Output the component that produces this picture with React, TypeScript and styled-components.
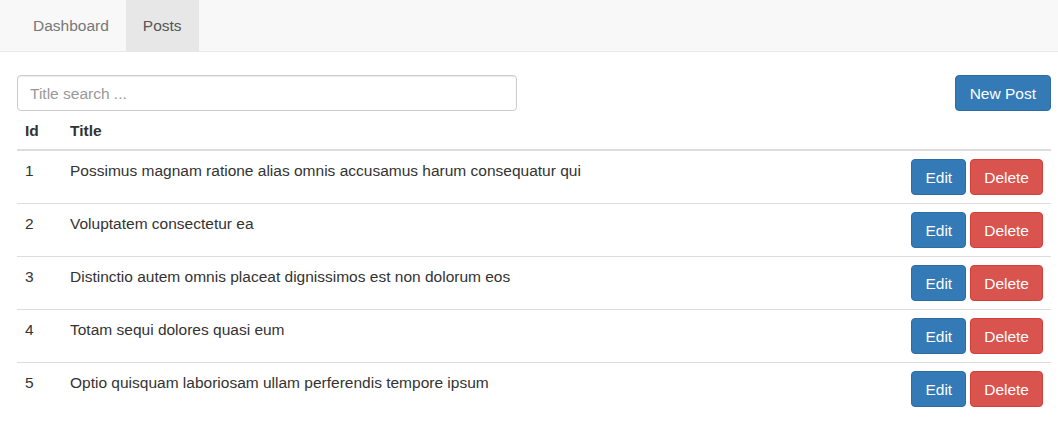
import React from 'react';
import styled, { createGlobalStyle } from 'styled-components';

const GlobalStyle = createGlobalStyle`
  * {
    box-sizing: border-box;
  }
  body {
    margin: 0;
    background: #fff;
    color: #333;
    font-family: "Liberation Sans", Helvetica, Arial, sans-serif;
    font-size: 15.5px;
    line-height: 22px;
  }
`;

const StyledNavbar = styled.nav`
  display: flex;
  height: 52px;
  padding-left: 16px;
  background-color: #f8f8f8;
  border-bottom: 1px solid #e7e7e7;
`;

const StyledNavLink = styled.a<{ $active?: boolean }>`
  display: block;
  height: 51px;
  padding: 15px 17px 14px;
  color: ${(p) => (p.$active ? '#555' : '#777')};
  background-color: ${(p) => (p.$active ? '#e7e7e7' : 'transparent')};
  text-decoration: none;
`;

const StyledMain = styled.main`
  padding: 23px 7px 0 17px;
`;

const StyledToolbar = styled.div`
  display: flex;
  justify-content: space-between;
  align-items: flex-start;
`;

const StyledSearch = styled.input`
  width: 500px;
  height: 36px;
  padding: 1px 12px 0;
  font: inherit;
  color: #555;
  border: 1px solid #ccc;
  border-radius: 4px;
  box-shadow: inset 0 1px 1px rgba(0, 0, 0, 0.075);
  outline: none;
  &::placeholder {
    color: #999;
  }
`;

const StyledButton = styled.button<{ $variant: 'primary' | 'danger' }>`
  height: 36px;
  padding: 1px 13px 0;
  font: inherit;
  color: #fff;
  border-radius: 4px;
  cursor: pointer;
  background-color: ${(p) => (p.$variant === 'primary' ? '#337ab7' : '#d9534f')};
  border: 1px solid ${(p) => (p.$variant === 'primary' ? '#2e6da4' : '#d43f3a')};
`;

const StyledNewButton = styled(StyledButton)`
  padding: 1px 14px 0;
`;

const StyledTable = styled.table`
  width: 100%;
  border-collapse: collapse;
  border-spacing: 0;
  th,
  td {
    padding: 9px 8px 7px;
    text-align: left;
    vertical-align: top;
  }
  th {
    font-weight: bold;
    border-bottom: 2px solid #ddd;
  }
  tbody tr + tr td {
    border-top: 1px solid #ddd;
  }
`;

const StyledIdCell = styled.td`
  width: 45px;
`;

const StyledActions = styled.td`
  text-align: right !important;
  white-space: nowrap;
  padding: 8px !important;
`;

const StyledActionGroup = styled.div`
  display: inline-flex;
  gap: 4px;
`;

const posts = [
  { id: 1, title: 'Possimus magnam ratione alias omnis accusamus harum consequatur qui' },
  { id: 2, title: 'Voluptatem consectetur ea' },
  { id: 3, title: 'Distinctio autem omnis placeat dignissimos est non dolorum eos' },
  { id: 4, title: 'Totam sequi dolores quasi eum' },
  { id: 5, title: 'Optio quisquam laboriosam ullam perferendis tempore ipsum' },
];

export default function App() {
  return (
    <>
      <GlobalStyle />
      <StyledNavbar>
        <StyledNavLink href="#">Dashboard</StyledNavLink>
        <StyledNavLink href="#" $active>
          Posts
        </StyledNavLink>
      </StyledNavbar>
      <StyledMain>
        <StyledToolbar>
          <StyledSearch placeholder="Title search ..." />
          <StyledNewButton $variant="primary">New Post</StyledNewButton>
        </StyledToolbar>
        <StyledTable>
          <thead>
            <tr>
              <th style={{ width: 45 }}>Id</th>
              <th>Title</th>
              <th />
            </tr>
          </thead>
          <tbody>
            {posts.map((post) => (
              <tr key={post.id}>
                <StyledIdCell>{post.id}</StyledIdCell>
                <td>{post.title}</td>
                <StyledActions>
                  <StyledActionGroup>
                    <StyledButton $variant="primary">Edit</StyledButton>
                    <StyledButton $variant="danger">Delete</StyledButton>
                  </StyledActionGroup>
                </StyledActions>
              </tr>
            ))}
          </tbody>
        </StyledTable>
      </StyledMain>
    </>
  );
}
